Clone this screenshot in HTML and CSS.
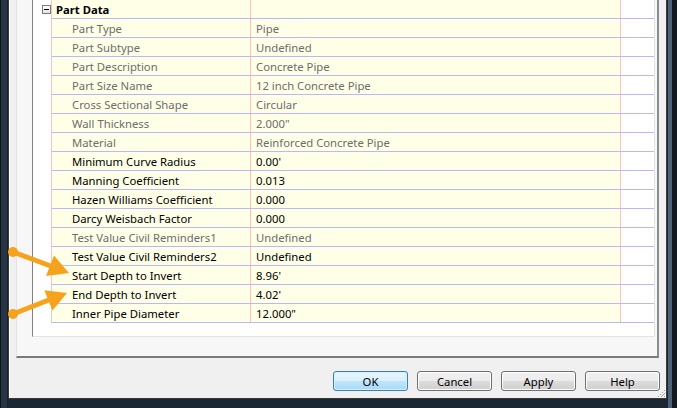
FILE: index.html
```html
<!DOCTYPE html>
<html>
<head>
<meta charset="utf-8">
<link rel="stylesheet" href="styles.css">
</head>
<body>
<div class="window">
  <div class="client">
    <div class="panel">
      <div class="grid">
        <div class="row header">
          <div class="gutter"><span class="toggle"></span></div>
          <div class="cells">
            <div class="label">Part Data</div>
            <div class="value"></div>
            <div class="rest"></div>
          </div>
        </div>
        <div class="row ro"><div class="gutter"></div><div class="cells"><div class="label">Part Type</div><div class="value">Pipe</div><div class="rest"></div></div></div>
        <div class="row ro"><div class="gutter"></div><div class="cells"><div class="label">Part Subtype</div><div class="value">Undefined</div><div class="rest"></div></div></div>
        <div class="row ro"><div class="gutter"></div><div class="cells"><div class="label">Part Description</div><div class="value">Concrete Pipe</div><div class="rest"></div></div></div>
        <div class="row ro"><div class="gutter"></div><div class="cells"><div class="label">Part Size Name</div><div class="value">12 inch Concrete Pipe</div><div class="rest"></div></div></div>
        <div class="row ro"><div class="gutter"></div><div class="cells"><div class="label">Cross Sectional Shape</div><div class="value">Circular</div><div class="rest"></div></div></div>
        <div class="row ro"><div class="gutter"></div><div class="cells"><div class="label">Wall Thickness</div><div class="value">2.000"</div><div class="rest"></div></div></div>
        <div class="row ro"><div class="gutter"></div><div class="cells"><div class="label">Material</div><div class="value">Reinforced Concrete Pipe</div><div class="rest"></div></div></div>
        <div class="row"><div class="gutter"></div><div class="cells"><div class="label">Minimum Curve Radius</div><div class="value">0.00'</div><div class="rest"></div></div></div>
        <div class="row"><div class="gutter"></div><div class="cells"><div class="label">Manning Coefficient</div><div class="value">0.013</div><div class="rest"></div></div></div>
        <div class="row"><div class="gutter"></div><div class="cells"><div class="label">Hazen Williams Coefficient</div><div class="value">0.000</div><div class="rest"></div></div></div>
        <div class="row"><div class="gutter"></div><div class="cells"><div class="label">Darcy Weisbach Factor</div><div class="value">0.000</div><div class="rest"></div></div></div>
        <div class="row ro"><div class="gutter"></div><div class="cells"><div class="label">Test Value Civil Reminders1</div><div class="value">Undefined</div><div class="rest"></div></div></div>
        <div class="row"><div class="gutter"></div><div class="cells"><div class="label">Test Value Civil Reminders2</div><div class="value">Undefined</div><div class="rest"></div></div></div>
        <div class="row"><div class="gutter"></div><div class="cells"><div class="label">Start Depth to Invert</div><div class="value">8.96'</div><div class="rest"></div></div></div>
        <div class="row"><div class="gutter"></div><div class="cells"><div class="label">End Depth to Invert</div><div class="value">4.02'</div><div class="rest"></div></div></div>
        <div class="row"><div class="gutter"></div><div class="cells"><div class="label">Inner Pipe Diameter</div><div class="value">12.000"</div><div class="rest"></div></div></div>
      </div>
    </div>
    <div class="buttons">
      <button class="btn default">OK</button>
      <button class="btn">Cancel</button>
      <button class="btn">Apply</button>
      <button class="btn">Help</button>
    </div>
    <svg class="grip" width="10" height="10" viewBox="0 0 10 10">
      <g fill="#a0a0a0">
        <rect x="8" y="2" width="1" height="1"/><rect x="6" y="4" width="1" height="1"/><rect x="4" y="6" width="1" height="1"/><rect x="2" y="8" width="1" height="1"/>
        <rect x="8" y="5" width="1" height="1"/><rect x="6" y="7" width="1" height="1"/><rect x="5" y="8" width="1" height="1"/>
        <rect x="8" y="8" width="1" height="1"/><rect x="7" y="6" width="1" height="1"/>
      </g>
      <g fill="#ffffff">
        <rect x="9" y="3" width="1" height="1"/><rect x="7" y="5" width="1" height="1"/><rect x="5" y="7" width="1" height="1"/><rect x="3" y="9" width="1" height="1"/>
        <rect x="9" y="6" width="1" height="1"/><rect x="6" y="9" width="1" height="1"/><rect x="9" y="9" width="1" height="1"/>
      </g>
    </svg>
  </div>
</div>
<svg class="arrows" width="677" height="408" viewBox="0 0 677 408">
  <g fill="#f7a21c" stroke="#f7a21c">
    <circle cx="13" cy="252" r="5" stroke="none"/>
    <line x1="13" y1="252" x2="52" y2="266.5" stroke-width="5"/>
    <polygon points="69,273 46,276 54,255.5" stroke="none"/>
    <circle cx="13" cy="314" r="5" stroke="none"/>
    <line x1="13" y1="314" x2="50" y2="299.5" stroke-width="5"/>
    <polygon points="67,293 52.5,310.5 44.3,290.3" stroke="none"/>
  </g>
</svg>
</body>
</html>
```

FILE: styles.css
```css
* { box-sizing: border-box; }

html, body {
  margin: 0;
  width: 677px;
  height: 408px;
  overflow: hidden;
}

body {
  position: relative;
  font-family: "Noto Sans", "Open Sans", sans-serif;
  font-size: 11.3px;
  background: #1c2734;
}

.window {
  height: 408px;
  display: flex;
  background: linear-gradient(to right,
    #0d131a 0 1px, #263544 1px 7px, #1a2430 7px 8px,
    #1c2734 8px 668px, #4f6178 668px 672px, #121920 672px 677px);
}

.client {
  position: relative;
  margin-left: 8px;
  width: 659px;
  height: 399px;
  background: #f0f0f0;
  border: 1px solid #3a3a3a;
  border-top: none;
  box-shadow: inset 1px 0 #ffffff;
  display: flex;
  flex-direction: column;
}

.panel {
  margin: 0 7px;
  height: 358px;
  background: #f7f7f7;
  border-left: 1px solid #e3e3e3;
  border-right: 2px solid #8c8c8c;
  border-bottom: 2px solid #7a7a7a;
  padding: 0 2px 19px 15px;
  display: flex;
}

.grid {
  flex: 1;
  background: #ffffff;
  border-left: 1px solid #828282;
  border-right: 1px solid #e3e3e3;
  border-bottom: 1px solid #e3e3e3;
  display: flex;
  flex-direction: column;
}

.row {
  display: flex;
  height: 19px;
  line-height: 20px;
  color: #000000;
}

.gutter {
  width: 18px;
  flex: none;
  position: relative;
}

.toggle {
  position: absolute;
  left: 9px;
  top: 5px;
  width: 9px;
  height: 9px;
  border: 1px solid #7b7b7b;
  background: linear-gradient(#ffffff, #e2e2e2);
}

.toggle::after {
  content: "";
  position: absolute;
  left: 1px;
  top: 3px;
  width: 5px;
  height: 1px;
  background: #000000;
}

.cells {
  flex: 1;
  display: flex;
  border-left: 1px solid #ffc0c0;
  border-bottom: 1px solid #b8b8ff;
}

.label {
  width: 199px;
  flex: none;
  padding-left: 20px;
  background: #ffffe8;
  border-right: 1px solid #ffc0c0;
  white-space: nowrap;
  overflow: hidden;
}

.value {
  width: 370px;
  flex: none;
  padding-left: 5px;
  background: #ffffe8;
  border-right: 1px solid #ffc0c0;
  white-space: nowrap;
  overflow: hidden;
}

.rest {
  flex: 1;
}

.header .label {
  padding-left: 4px;
  font-weight: bold;
}

.ro .label,
.ro .value {
  color: #6d6d6d;
}

.buttons {
  display: flex;
  justify-content: flex-end;
  gap: 9px;
  padding: 13px 6px 0 0;
}

.btn {
  width: 75px;
  height: 20px;
  padding: 0;
  font-family: inherit;
  font-size: 11.3px;
  color: #000000;
  border: 1px solid #707070;
  border-radius: 3px;
  background: linear-gradient(#f2f2f2 0, #ebebeb 50%, #dddddd 50%, #cfcfcf 100%);
  box-shadow: inset 0 0 0 1px #fcfcfc;
}

.btn.default {
  border-color: #3c7fb1;
  background: linear-gradient(#eaf6fd 0, #d9f0fc 50%, #bee6fd 50%, #a7d9f5 100%);
  box-shadow: inset 0 0 0 1px #d4efff;
}

.grip {
  position: absolute;
  right: 0;
  bottom: 0;
}

.arrows {
  position: absolute;
  left: 0;
  top: 0;
  pointer-events: none;
}
```
